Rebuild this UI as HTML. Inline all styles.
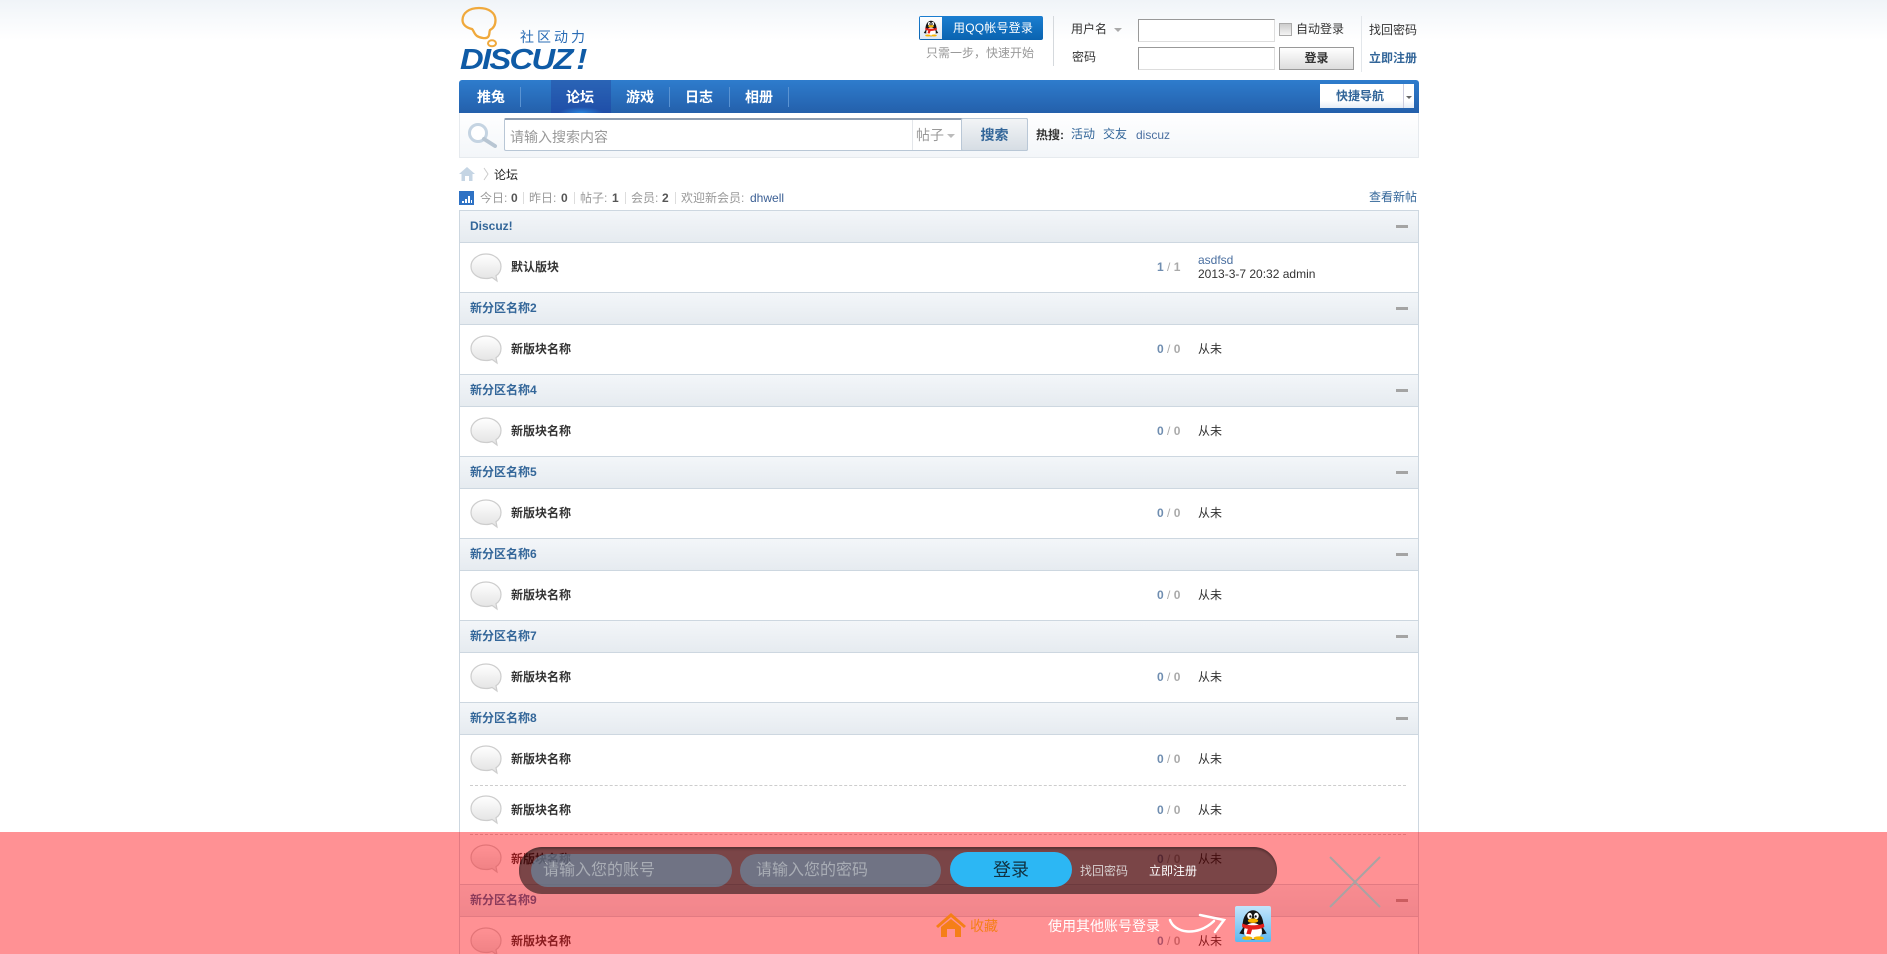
<!DOCTYPE html>
<html lang="zh"><head><meta charset="utf-8"><title>Discuz!</title>
<style>
html,body{margin:0;padding:0;width:1887px;height:954px;overflow:hidden;background:#fff}
body{position:relative;font:12px/16px "Liberation Sans","WenQuanYi Zen Hei","Noto Sans CJK SC",sans-serif;color:#333}
#top{position:absolute;left:0;top:0;width:1887px;height:40px;background:linear-gradient(#f0f4f8,#fff)}
.a{position:absolute;white-space:nowrap}
svg{position:absolute;display:block}
.h{position:absolute;left:459px;width:958px;height:31px;border:1px solid #cdd7e0;background:linear-gradient(#f3f6f9,#e6ebf0)}
.h b{position:absolute;left:10px;top:7px;color:#336699;font-size:12px}
.h i{position:absolute;left:936px;top:14px;width:12px;height:3px;background:#a4a4a4}
.r{position:absolute;left:459px;width:958px;border-left:1px solid #cdd7e0;border-right:1px solid #cdd7e0}
.r b{position:absolute;left:51px;font-size:12px;color:#333;white-space:nowrap}
.r .n{position:absolute;left:697px;color:#aaa;white-space:nowrap;font-weight:bold}
.r .n u{text-decoration:none;color:#6f8db0}
.r .n s{text-decoration:none;font-weight:normal}
.r .t{position:absolute;left:738px;color:#333;white-space:nowrap}
.r svg{left:10px;width:32px;height:30px}
.d{position:absolute;left:470px;width:936px;border-top:1px dashed #cdcdcd}
.nv{position:absolute;top:81px;height:33px;line-height:33px;color:#fff;font-weight:bold;font-size:14px}
.sp{position:absolute;top:87px;width:1px;height:20px;background:#5a93d2}
.gr{color:#999}.lb{color:#336699}
.st{position:absolute;top:190px;white-space:nowrap;color:#999}
.st b{color:#555}
.br{position:absolute;top:192px;width:1px;height:12px;background:#ddd}
</style></head>
<body>
<svg width="0" height="0" style="position:absolute"><defs>
<linearGradient id="bb" x1="0" y1="0" x2="0" y2="1"><stop offset="0" stop-color="#fff"/><stop offset="1" stop-color="#e2e2e2"/></linearGradient>
<symbol id="bub" viewBox="0 0 32 30"><path d="M16 1C7.500 1 1 6.500 1 13.500S7.500 25.500 16 25.500c2.500 0 4.500-.4 6-1.100L27 28 26 22.800C29.500 20.500 31 17.400 31 13.500 31 6.500 24.500 1 16 1Z" fill="url(#bb)" stroke="#cdcdcd" stroke-width="1.200"/></symbol>
<symbol id="pg" viewBox="0 0 36 36"><ellipse cx="18" cy="19" rx="11" ry="15.500" fill="#141414"/><path d="M8 21 3.500 28l5 1ZM28 21l4.500 7-5 1Z" fill="#141414"/><ellipse cx="18" cy="25.500" rx="9.500" ry="8.500" fill="#fff"/><ellipse cx="14.500" cy="9.500" rx="2.600" ry="3.400" fill="#fff"/><ellipse cx="21.500" cy="9.500" rx="2.600" ry="3.400" fill="#fff"/><circle cx="15.200" cy="10" r="1.200" fill="#111"/><circle cx="20.800" cy="10" r="1.200" fill="#111"/><ellipse cx="18" cy="14.500" rx="5.500" ry="2.300" fill="#f7b500"/><path d="M6.500 17.500C12 20 24 20 29.500 17.500L30 21C26 23.500 22 23.800 17 24L15.500 29 11 28.500 12.500 23.200C10 22.800 8 22 6.500 21Z" fill="#e3201b"/><ellipse cx="12" cy="33" rx="5.500" ry="1.900" fill="#f7b500"/><ellipse cx="24" cy="33" rx="5.500" ry="1.900" fill="#f7b500"/></symbol>
</defs></svg>
<div id="top"></div>

<!-- logo -->
<svg style="left:459px;top:6px" width="42" height="42" viewBox="0 0 42 42"><path d="M20 2C10 2 3.500 7 3.500 14 3.500 19 8 22 13 23 14.500 24 15 28 18 30 21 32 27 33 29 31 31 29 30 26 31 24 35 22 36.500 18 36.500 14 36.500 7 30 2 20 2Z" fill="none" stroke="#f0a93c" stroke-width="2.300"/><ellipse cx="33" cy="37.300" rx="4" ry="3" fill="none" stroke="#f0a93c" stroke-width="2"/></svg>
<div class="a" style="left:520px;top:27px;font-size:14px;letter-spacing:3px;color:#2a6cb5;line-height:20px">社区动力</div>
<div class="a" style="left:460px;top:45px;font:italic bold 29px/30px 'Liberation Sans',sans-serif;color:#0f5ba6;letter-spacing:-1.500px;transform:scaleX(1.130);transform-origin:left">DISCUZ<span style="margin-left:4px">!</span></div>

<!-- login area -->
<div class="a" style="left:919px;top:16px;width:124px;height:24px;border-radius:2px;background:linear-gradient(#1b7ed0,#0a63b0)"></div>
<div class="a" style="left:920px;top:17px;width:22px;height:22px;background:linear-gradient(#fff,#dce7f2)"></div>
<svg style="left:922px;top:18px" width="18" height="20"><use href="#pg" width="18" height="20"/></svg>
<div class="a" style="left:953px;top:20px;color:#fff;font-size:12px;letter-spacing:.2px">用QQ帐号登录</div>
<div class="a gr" style="left:926px;top:45px;font-size:12px">只需一步，快速开始</div>
<div class="a" style="left:1053px;top:16px;width:1px;height:50px;background:#d5d9dd"></div>
<div class="a" style="left:1071px;top:21px">用户名</div>
<div class="a" style="left:1114px;top:28px;width:0;height:0;border:4px solid transparent;border-top-color:#aaa;border-bottom:0"></div>
<div class="a" style="left:1072px;top:49px">密码</div>
<div class="a" style="left:1138px;top:19px;width:135px;height:21px;background:#fff;border:1px solid;border-color:#999 #ddd #ddd #999"></div>
<div class="a" style="left:1138px;top:47px;width:135px;height:21px;background:#fff;border:1px solid;border-color:#999 #ddd #ddd #999"></div>
<div class="a" style="left:1279px;top:23px;width:11px;height:11px;border:1px solid #aaa;background:linear-gradient(#ccc,#f4f4f4)"></div>
<div class="a" style="left:1296px;top:21px">自动登录</div>
<div class="a" style="left:1279px;top:47px;width:73px;height:21px;border:1px solid #999;background:linear-gradient(#fff,#ddd);text-align:center;line-height:20px;font-weight:bold">登录</div>
<div class="a" style="left:1361px;top:16px;width:1px;height:56px;background:#e3e7eb"></div>
<div class="a" style="left:1369px;top:22px">找回密码</div>
<div class="a lb" style="left:1369px;top:50px;font-weight:bold">立即注册</div>

<!-- nav -->
<div class="a" style="left:459px;top:80px;width:960px;height:33px;border-radius:3px 3px 0 0;background:linear-gradient(#2e7ccd,#2460ab)"></div>
<div class="a" style="left:551px;top:80px;width:60px;height:33px;background:radial-gradient(ellipse 22px 6px at 50% 100%,#2b86dd,transparent),linear-gradient(#2a64b6,#1f4ea8)"></div>
<div class="a nv" style="left:477px">推兔</div><div class="sp" style="left:520px"></div>
<div class="a nv" style="left:566px">论坛</div>
<div class="a nv" style="left:626px">游戏</div><div class="sp" style="left:669px"></div>
<div class="a nv" style="left:685px">日志</div><div class="sp" style="left:729px"></div>
<div class="a nv" style="left:745px">相册</div><div class="sp" style="left:788px"></div>
<div class="a" style="left:1320px;top:84px;width:94px;height:24px;background:linear-gradient(#fff 70%,#e4ecf6)"></div>
<div class="a" style="left:1403px;top:84px;width:1px;height:24px;background:#ccd"></div>
<div class="a lb" style="left:1336px;top:88px;font-weight:bold">快捷导航</div>
<div class="a" style="left:1406px;top:96px;width:0;height:0;border:3px solid transparent;border-top-color:#666;border-bottom:0"></div>

<!-- search -->
<div class="a" style="left:459px;top:113px;width:958px;height:44px;background:linear-gradient(#fff,#f3f6f9);border:1px solid #e6eaee;border-top:0"></div>
<svg style="left:467px;top:122px" width="31" height="26"><circle cx="11" cy="11" r="8.500" fill="#fff" stroke="#c5d4e2" stroke-width="3"/><path d="M17 17 28 24" stroke="#b8c6d3" stroke-width="4" stroke-linecap="round"/></svg>
<div class="a" style="left:504px;top:118px;width:524px;height:33px;background:#fff;box-sizing:border-box;border:1px solid #b9c7d6;border-top:2px solid #8e9db0;border-radius:2px"></div>
<div class="a" style="left:510px;top:129px;font-size:14px;color:#999">请输入搜索内容</div>
<div class="a" style="left:912px;top:120px;width:1px;height:30px;background:#e3e6ea"></div>
<div class="a" style="left:916px;top:127px;font-size:14px;color:#999">帖子</div>
<div class="a" style="left:947px;top:134px;width:0;height:0;border:4px solid transparent;border-top-color:#bbb;border-bottom:0"></div>
<div class="a" style="left:961px;top:118px;width:67px;height:33px;box-sizing:border-box;border:1px solid #b9c7d6;border-radius:2px;background:linear-gradient(#f2f4f6,#d6dde4);text-align:center;line-height:33px;font-size:14px;font-weight:bold;color:#336699">搜索</div>
<div class="a" style="left:1036px;top:127px;font-weight:bold;color:#333">热搜:</div>
<div class="a lb" style="left:1071px;top:126px">活动</div>
<div class="a lb" style="left:1103px;top:126px">交友</div>
<div class="a" style="left:1136px;top:127px;color:#4a6fa0">discuz</div>

<!-- breadcrumb -->
<svg style="left:459px;top:167px" width="16" height="14"><path d="M8 0 0 7h2.500v7H6V9h4v5h3.500V7H16Z" fill="#c5d5e4"/></svg>
<svg style="left:483px;top:167px" width="6" height="14"><path d="M1 1 5 7 1 13" fill="none" stroke="#ccc"/></svg>
<div class="a" style="left:494px;top:167px;color:#222">论坛</div>
<svg style="left:459px;top:191px" width="15" height="14"><rect width="15" height="14" fill="#2f72c4"/><path d="M3 10h2v2H3ZM6 8h2v4H6ZM9 5h2v7H9ZM12 9h1v3h-1Z" fill="#fff"/></svg>
<span class="st" style="left:480px">今日:</span><span class="st" style="left:511px"><b>0</b></span><span class="br" style="left:523px"></span>
<span class="st" style="left:529px">昨日:</span><span class="st" style="left:561px"><b>0</b></span><span class="br" style="left:574px"></span>
<span class="st" style="left:580px">帖子:</span><span class="st" style="left:612px"><b>1</b></span><span class="br" style="left:625px"></span>
<span class="st" style="left:631px">会员:</span><span class="st" style="left:662px"><b>2</b></span><span class="br" style="left:675px"></span>
<span class="st" style="left:681px">欢迎新会员:</span><span class="st" style="left:750px;color:#3b5f94">dhwell</span>
<div class="a lb" style="left:1369px;top:189px">查看新帖</div>

<!-- forum -->
<div class="h" style="top:210px"><b>Discuz!</b><i></i></div>
<div class="r" style="top:243px;height:49px"><svg style="top:10px"><use href="#bub"/></svg><b style="top:16px">默认版块</b><span class="n" style="top:16px"><u>1</u> <s>/</s> 1</span><span class="t" style="top:10px;line-height:14px"><span style="color:#4a6fa0">asdfsd</span><br>2013-3-7 20:32 admin</span></div>
<div class="h" style="top:292px"><b>新分区名称2</b><i></i></div>
<div class="r" style="top:325px;height:49px"><svg style="top:10px"><use href="#bub"/></svg><b style="top:16px">新版块名称</b><span class="n" style="top:16px"><u>0</u> <s>/</s> 0</span><span class="t" style="top:16px">从未</span></div>
<div class="h" style="top:374px"><b>新分区名称4</b><i></i></div>
<div class="r" style="top:407px;height:49px"><svg style="top:10px"><use href="#bub"/></svg><b style="top:16px">新版块名称</b><span class="n" style="top:16px"><u>0</u> <s>/</s> 0</span><span class="t" style="top:16px">从未</span></div>
<div class="h" style="top:456px"><b>新分区名称5</b><i></i></div>
<div class="r" style="top:489px;height:49px"><svg style="top:10px"><use href="#bub"/></svg><b style="top:16px">新版块名称</b><span class="n" style="top:16px"><u>0</u> <s>/</s> 0</span><span class="t" style="top:16px">从未</span></div>
<div class="h" style="top:538px"><b>新分区名称6</b><i></i></div>
<div class="r" style="top:571px;height:49px"><svg style="top:10px"><use href="#bub"/></svg><b style="top:16px">新版块名称</b><span class="n" style="top:16px"><u>0</u> <s>/</s> 0</span><span class="t" style="top:16px">从未</span></div>
<div class="h" style="top:620px"><b>新分区名称7</b><i></i></div>
<div class="r" style="top:653px;height:49px"><svg style="top:10px"><use href="#bub"/></svg><b style="top:16px">新版块名称</b><span class="n" style="top:16px"><u>0</u> <s>/</s> 0</span><span class="t" style="top:16px">从未</span></div>
<div class="h" style="top:702px"><b>新分区名称8</b><i></i></div>
<div class="r" style="top:735px;height:50px"><svg style="top:10px"><use href="#bub"/></svg><b style="top:16px">新版块名称</b><span class="n" style="top:16px"><u>0</u> <s>/</s> 0</span><span class="t" style="top:16px">从未</span></div>
<div class="d" style="top:785px"></div>
<div class="r" style="top:785px;height:49px"><svg style="top:10px"><use href="#bub"/></svg><b style="top:17px">新版块名称</b><span class="n" style="top:17px"><u>0</u> <s>/</s> 0</span><span class="t" style="top:17px">从未</span></div>
<div class="d" style="top:834px"></div>
<div class="r" style="top:834px;height:50px"><svg style="top:10px"><use href="#bub"/></svg><b style="top:17px">新版块名称</b><span class="n" style="top:17px"><u>0</u> <s>/</s> 0</span><span class="t" style="top:17px">从未</span></div>
<div class="h" style="top:884px"><b>新分区名称9</b><i></i></div>
<div class="r" style="top:917px;height:37px"><svg style="top:10px"><use href="#bub"/></svg><b style="top:16px">新版块名称</b><span class="n" style="top:16px"><u>0</u> <s>/</s> 0</span><span class="t" style="top:16px">从未</span></div>

<!-- overlay -->
<div class="a" style="left:0;top:832px;width:1887px;height:122px;background:rgba(255,0,6,.43)"></div>
<div class="a" style="left:519px;top:847px;width:758px;height:47px;border-radius:23px;background:rgba(0,0,0,.52);box-shadow:inset 0 2px 2px rgba(0,0,0,.3)"></div>
<div class="a" style="left:531px;top:854px;width:201px;height:33px;border-radius:17px;background:rgba(105,147,173,.6)"></div>
<div class="a" style="left:740px;top:854px;width:201px;height:33px;border-radius:17px;background:rgba(105,147,173,.6)"></div>
<div class="a" style="left:543px;top:861px;font-size:16px;line-height:20px;color:#a9adb5">请输入您的账号</div>
<div class="a" style="left:756px;top:861px;font-size:16px;line-height:20px;color:#a9adb5">请输入您的密码</div>
<div class="a" style="left:950px;top:852px;width:122px;height:35px;border-radius:18px;background:#2cb7f4;text-align:center;line-height:37px;font-size:18px;color:#103040">登录</div>
<div class="a" style="left:1080px;top:863px;color:#d8d0d0">找回密码</div>
<div class="a" style="left:1149px;top:863px;color:#fff">立即注册</div>
<svg style="left:1329px;top:856px" width="52" height="52"><path d="M1 1 51 51M51 1 1 51" stroke="#a9a3a3" stroke-width="2"/></svg>
<svg style="left:936px;top:913px" width="30" height="24"><path d="M15 0 0 13l2 2L15 4 28 15l2-2Z" fill="#f57f17"/><path d="M5 14 15 6l10 8v10h-6v-8h-8v8H5Z" fill="#f57f17"/></svg>
<div class="a" style="left:970px;top:917px;font-size:14px;line-height:18px;color:#f57f17">收藏</div>
<div class="a" style="left:1048px;top:917px;font-size:14px;line-height:18px;color:#fff">使用其他账号登录</div>
<svg style="left:1168px;top:912px" width="58" height="26"><path d="M2 8C6 20 28 26 46 9" fill="none" stroke="#fff" stroke-width="2.500" stroke-linecap="round"/><path d="M32 3 56 8 47 20" fill="none" stroke="#fff" stroke-width="2.500" stroke-linecap="round"/></svg>
<div class="a" style="left:1235px;top:906px;width:36px;height:36px;border-radius:2px;background:linear-gradient(#c3e5fb,#5cb8ef)"></div>
<svg style="left:1236px;top:906px" width="34" height="36"><use href="#pg" width="34" height="36"/></svg>
</body></html>
